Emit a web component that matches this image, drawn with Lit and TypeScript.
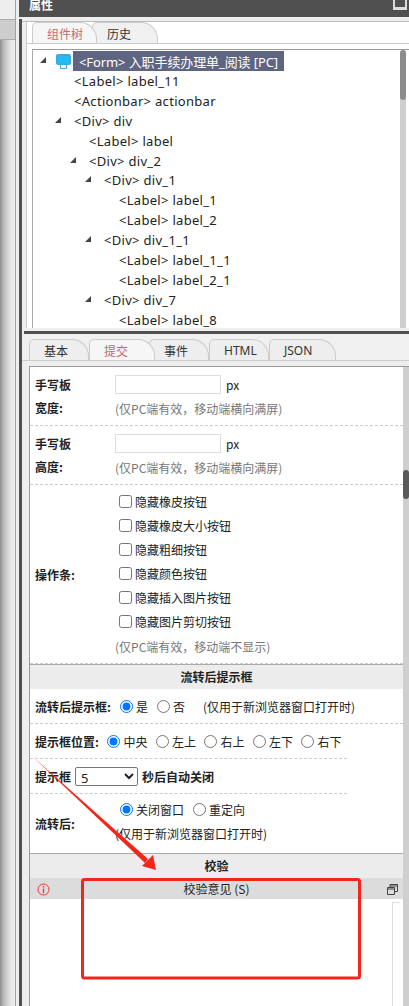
import { LitElement, html, css, svg } from "lit";
import { customElement } from "lit/decorators.js";

const tree: [string, number, boolean][] = [
  ["<Label> label_11", 0, false],
  ["<Actionbar> actionbar", 0, false],
  ["<Div> div", 0, true],
  ["<Label> label", 1, false],
  ["<Div> div_2", 1, true],
  ["<Div> div_1", 2, true],
  ["<Label> label_1", 3, false],
  ["<Label> label_2", 3, false],
  ["<Div> div_1_1", 2, true],
  ["<Label> label_1_1", 3, false],
  ["<Label> label_2_1", 3, false],
  ["<Div> div_7", 2, true],
  ["<Label> label_8", 3, false],
];
const checks = ["隐藏橡皮按钮", "隐藏橡皮大小按钮", "隐藏粗细按钮", "隐藏颜色按钮", "隐藏插入图片按钮", "隐藏图片剪切按钮"];
const positions = ["中央", "左上", "右上", "左下", "右下"];

@customElement("app-root")
export class AppRoot extends LitElement {
  static styles = css`
    :host { display: block; width: 409px; height: 1006px; overflow: hidden; position: relative; background: #fff;
      font-family: "Noto Sans CJK SC", "Open Sans", sans-serif; font-size: 12px; color: #222; }
    * { box-sizing: border-box; }
    .page { display: flex; height: 1006px; }
    .shade { width: 16px; flex: none; display: flex; flex-direction: column; border-right: 1px solid #a0a0a0; }
    .s1 { height: 20px; background: #eee; border-bottom: 1px solid #aaa; }
    .s2 { height: 20px; background: #cdcdcd; border-bottom: 1px solid #aaa; }
    .s3 { flex: 1; background: linear-gradient(90deg, #8e8e8e 0, #bdbdbd 4px, #e2e2e2 10px, #efefef 15px); }
    .gut { width: 3px; flex: none; background: #eee; }
    .main { width: 390px; flex: none; display: flex; flex-direction: column; background: #eee; }
    .title { height: 17px; flex: none; background: #505050; color: #fff; font-size: 12px; font-weight: 700; line-height: 9px; padding-left: 10px; position: relative; overflow: hidden; }
    .winbtn { position: absolute; right: 2px; top: 0; width: 14px; height: 10px; background: #ddd; padding: 0 2px 3px; }
    .winbtn i { display: block; width: 100%; height: 100%; background: #505050; }
    .body { flex: 1; display: flex; padding-top: 2px; min-height: 0; }
    .rail { width: 3px; background: #505050; flex: none; }
    .col { flex: 1; min-width: 0; display: flex; flex-direction: column; }
    .top { height: 306px; flex: none; margin-left: 4px; border-left: 1px solid #ccc; background: #fff; display: flex; flex-direction: column; }
    .hairline { height: 3px; flex: none; border-bottom: 1px solid #bbb; background: #eee; }
    .tabs { display: flex; align-items: flex-end; flex: none; }
    .top-tabs { height: 22px; padding-left: 5px; border-bottom: 1px solid #ccc; background: #fff; }
    .tab { font-size: 12px; display: flex; align-items: center; padding-left: 14px; border: 1px solid #ccc; border-bottom: 0; border-radius: 5px 17px 0 0; background: #f0f0f0; color: #333; position: relative; }
    .tab.on { color: #c56a6a; background: #f6f6f6; z-index: 1; }
    .top-tabs .tab { height: 21px; }
    .tree-box { height: 279px; flex: none; margin: 5px 0 0 5px; border-left: 1px solid #aaa; border-top: 1px solid #999; background: #fff; display: flex; overflow: hidden; }
    .tree { flex: 1; min-width: 0; padding-top: 1px; color: #222; font-family: "Noto Sans", "Noto Sans CJK SC", sans-serif; font-size: 13px; }
    .tree-row { height: 19.9px; display: flex; align-items: center; white-space: nowrap; position: relative; letter-spacing: .3px; }
    .tree-row.root { letter-spacing: -.1px; height: 20px; }
    .tree-row:last-child { height: 18px; padding-top: 2px; line-height: 16px; }
    .tri { position: absolute; width: 0; height: 0; border-left: 6px solid transparent; border-bottom: 6px solid #444; top: 6px; }
    .formsel { display: flex; align-items: center; height: 20px; margin-left: 40px; padding-left: 6px; background: #5f6480; color: #fff; width: 211px; }
    .mon { position: absolute; left: 22px; top: 2px; }
    .vs { width: 6px; flex: none; background: #cfcfcf; margin-right: 3px; border-radius: 3px 3px 0 0; position: relative; }
    .vs i { display: block; position: absolute; left: 0; right: 0; top: 0; height: 50px; background: #8c8c8c; border-radius: 3px; }
    .split { height: 3px; flex: none; background: #505050; margin: 3px 0 0 2px; }
    .sub-tabs { height: 27px; padding-left: 7px; background: #f0f0f0; border-bottom: 1px solid #ccc; }
    .sub-tabs .tab { height: 21px; background: #eee; }
    .sub-tabs .tab.on { background: #f6f6f6; }
    .sub-tabs .tab.w { font-family: "Noto Sans", sans-serif; }
    .panel { flex: 1; margin: 5px 0 0 7px; border-left: 1px solid #999; border-top: 1px solid #999; background: #fff; display: flex; min-height: 0; }
    .form { flex: 1; min-width: 0; }
    .vs2 { width: 6px; flex: none; background: #cfcfcf; position: relative; }
    .vs2 i { position: absolute; left: 0; right: 0; top: 103px; height: 29px; background: #5a5a5a; border-radius: 3px; }
    .row { border-bottom: 1px dashed #ccc; display: grid; grid-template-columns: 80px 1fr; padding-left: 5px; align-items: center; }
    .lbl { font-weight: 700; line-height: 23px; }
    .pad { height: 59px; }
    .pad .in { display: flex; align-items: center; gap: 5px; height: 19px; }
    .in input { width: 106px; height: 19px; border: 1px solid #ddd; background: #fff; margin: 0; padding: 0; }
    .hint { color: #777; font-size: 12px; line-height: 18px; }
    .pad .cell { display: flex; flex-direction: column; gap: 6px; align-self: start; padding-top: 8px; }
    .ops { height: 179px; }
    .ops .cell { display: flex; flex-direction: column; align-self: start; padding-top: 4px; }
    .chk { display: flex; align-items: center; height: 24px; gap: 3px; padding-left: 4px; }
    .chk input { margin: 0; width: 13px; height: 13px; }
    .ops .hint { margin-top: 5px; }
    .sec { height: 25px; flex: none; background: #ececec; text-align: center; line-height: 24px; font-weight: 700; border-top: 1px solid #aaa; }
    .line { display: flex; align-items: center; padding-left: 5px; white-space: nowrap; border-bottom: 1px dashed #ccc; height: 35px; gap: 9px; }
    .line b { font-weight: 700; }
    .radio { display: inline-flex; align-items: center; gap: 3px; }
    .radio input { margin: 0; width: 13px; height: 13px; }
    .note { margin-left: 9px; }
    .short { width: 317px; }
    .tight { gap: 8.5px; }
    .l3 { gap: 4px; }
    .l3 select { width: 63px; height: 19px; font-size: 13px; font-family: "Noto Sans", sans-serif; background: #fff; border: 1px solid #777; border-radius: 2px; padding: 0 0 0 1px; color: #222; }
    .after { display: grid; grid-template-columns: 80px 1fr; padding-left: 5px; height: 59px; align-items: center; }
    .after .cell { display: flex; flex-direction: column; gap: 7px; align-self: start; padding-top: 6px; }
    .rrow { display: flex; gap: 9px; padding-left: 5px; height: 18px; }
    .note2 { line-height: 18px; }
    .verify-h { height: 21px; background: #dcdcdc; display: flex; align-items: center; justify-content: center; position: relative; }
    .info { position: absolute; left: 7px; top: 5px; }
    .restore { position: absolute; right: 5px; top: 6px; }
    .verify-b { position: relative; height: 107px; }
    .verify-b i { position: absolute; right: 3px; top: 3px; bottom: 0; width: 8px; border-left: 1px solid #ddd; border-top: 1px solid #ddd; }
    .mark { position: absolute; left: 0; top: 0; pointer-events: none; }
  `;

  render() {
    return html`<div class="page">
      <div class="shade"><div class="s1"></div><div class="s2"></div><div class="s3"></div></div>
      <div class="gut"></div>
      <div class="main">
        <div class="title">属性<div class="winbtn"><i></i></div></div>
        <div class="body">
          <div class="rail"></div>
          <div class="col">
            <div class="hairline"></div>
            <div class="top">
              <div class="tabs top-tabs">
                <div class="tab on" style="width:65px">组件树</div>
                <div class="tab" style="width:66px;margin-left:-5px">历史</div>
              </div>
              <div class="tree-box">
                <div class="tree">
                  <div class="tree-row root">
                    <span class="tri" style="left:7px"></span>
                    <svg class="mon" width="17" height="17" viewBox="0 0 17 17"><rect x="1" y="1" width="15" height="11" rx="2" fill="#3fa9e6"/><rect x="3" y="3" width="11" height="7" fill="#22bdf2"/><path d="M5.500 12v3.500h6V12" stroke="#3fa9e6" fill="none"/></svg>
                    <span class="formsel">&lt;Form&gt; 入职手续办理单_阅读 [PC]</span>
                  </div>
                  ${tree.map(([t, d, open]) => html`<div class="tree-row" style="padding-left:${41 + d * 15}px">
                    ${open ? html`<span class="tri" style="left:${22 + d * 15}px"></span>` : ""}${t}</div>`)}
                </div>
                <div class="vs"><i></i></div>
              </div>
            </div>
            <div class="split"></div>
            <div class="tabs sub-tabs">
              <div class="tab" style="width:60px">基本</div>
              <div class="tab on" style="width:66px">提交</div>
              <div class="tab" style="width:60px;margin-left:-6px">事件</div>
              <div class="tab w" style="width:60px">HTML</div>
              <div class="tab w" style="width:67px">JSON</div>
            </div>
            <div class="panel">
              <div class="form">
                ${["宽度:", "高度:"].map((l) => html`<div class="row pad">
                  <div class="lbl">手写板<br />${l}</div>
                  <div class="cell"><div class="in"><input /> px</div><div class="hint">(仅PC端有效，移动端横向满屏)</div></div>
                </div>`)}
                <div class="row ops">
                  <div class="lbl">操作条:</div>
                  <div class="cell">
                    ${checks.map((c) => html`<label class="chk"><input type="checkbox" />${c}</label>`)}
                    <div class="hint">(仅PC端有效，移动端不显示)</div>
                  </div>
                </div>
                <div class="sec">流转后提示框</div>
                <div class="line"><b>流转后提示框:</b>
                  <label class="radio"><input type="radio" name="a" checked />是</label>
                  <label class="radio"><input type="radio" name="a" />否</label>
                  <span class="note">(仅用于新浏览器窗口打开时)</span></div>
                <div class="line short tight"><b>提示框位置:</b>
                  ${positions.map((p, i) => html`<label class="radio"><input type="radio" name="b" ?checked=${i === 0} />${p}</label>`)}</div>
                <div class="line short l3"><b>提示框</b>
                  <select><option>5</option></select><b>秒后自动关闭</b></div>
                <div class="after">
                  <b>流转后:</b>
                  <div class="cell">
                    <div class="rrow"><label class="radio"><input type="radio" name="c" checked />关闭窗口</label><label class="radio"><input type="radio" name="c" />重定向</label></div>
                    <div class="note2">(仅用于新浏览器窗口打开时)</div>
                  </div>
                </div>
                <div class="sec">校验</div>
                <div class="verify-h">校验意见 (S)
                  <svg class="info" width="13" height="13" viewBox="0 0 13 13"><circle cx="6.500" cy="6.500" r="5.500" fill="none" stroke="#e33"/><path d="M6.500 3v1.500M6.500 5.500V10" stroke="#e33" stroke-width="1.300"/></svg>
                  <svg class="restore" width="11" height="11" viewBox="0 0 11 11"><path d="M.5 3.500h7v7h-7zM3 3.500v-3h7.500v7H7.500M.5 5h7M3 2h7" fill="none" stroke="#444"/></svg>
                </div>
                <div class="verify-b"><i></i></div>
              </div>
              <div class="vs2"><i></i></div>
            </div>
          </div>
        </div>
      </div>
      <svg class="mark" width="409" height="1006" viewBox="0 0 409 1006">
        ${svg`<path d="M33 757 L148 859 L145 863 Z" fill="#f2261c"/>
        <path d="M156 870 L142 866 L153 855 Z" fill="#f2261c"/>
        <rect x="82.500" y="879.500" width="277" height="98.500" rx="2" fill="none" stroke="#f2261c" stroke-width="3"/>`}
      </svg>
    </div>`;
  }
}
